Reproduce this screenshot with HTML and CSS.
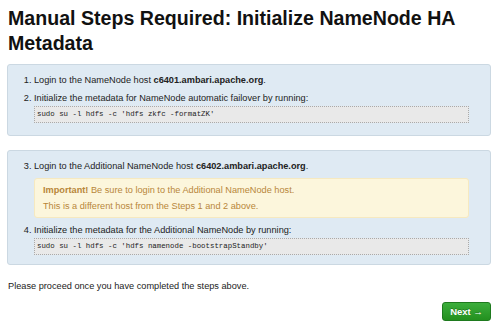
FILE: index.html
```html
<!DOCTYPE html>
<html lang="en">

<head>
    <meta charset="UTF-8">
    <title>Manual Steps Required</title>
    <link rel="stylesheet" href="styles.css">
</head>

<body>

    <div class="page">
        <h2 class="title">Manual Steps Required: Initialize NameNode HA Metadata</h2>

        <div class="well">
            <ol class="steps">
                <li>Login to the NameNode host <b>c6401.ambari.apache.org</b>.</li>
                <li>Initialize the metadata for NameNode automatic failover by running:
                    <div class="code">sudo su -l hdfs -c 'hdfs zkfc -formatZK'</div>
                </li>
            </ol>
        </div>

        <div class="well well-last">
            <ol class="steps" start="3">
                <li>Login to the Additional NameNode host <b>c6402.ambari.apache.org</b>.
                    <div class="alert">
                        <b>Important!</b> Be sure to login to the Additional NameNode host.<br>
                        This is a different host from the Steps 1 and 2 above.
                    </div>
                </li>
                <li>Initialize the metadata for the Additional NameNode by running:
                    <div class="code">sudo su -l hdfs -c 'hdfs namenode -bootstrapStandby'</div>
                </li>
            </ol>
        </div>

        <p class="proceed">Please proceed once you have completed the steps above.</p>

        <div class="actions">
            <button class="btn-next">Next &rarr;</button>
        </div>
    </div>

</body>

</html>
```

FILE: styles.css
```css
body {
    margin: 0;
    font-family: "Liberation Sans", Arial, sans-serif;
    font-size: 9.2px;
    color: #222;
    background: #fff;
}

.page {
    padding: 0 9px 0 7px;
}

.title {
    margin: 6px 0 8px 1px;
    font-size: 19.6px;
    line-height: 25px;
    font-weight: bold;
    color: #111;
}

.well {
    background-color: #dfeaf3;
    border: 1px solid #cbd8e2;
    border-radius: 3px;
    padding: 7px 21px 12px 0;
    margin-bottom: 14px;
}

.well-last {
    padding-bottom: 9px;
}

.steps {
    margin: 0;
    padding-left: 26px;
}

.steps li {
    line-height: 16px;
    margin-bottom: 2px;
}

.steps li:last-child {
    margin-bottom: 0;
}

.code {
    font-family: "Liberation Mono", "Courier New", monospace;
    font-size: 7.4px;
    line-height: 15px;
    background-color: #e9e9e9;
    border: 1px dotted #aaa;
    padding: 0 2px;
    margin-top: 0;
}

.alert {
    background-color: #fcf6dc;
    border: 1px solid #f6e9c0;
    border-radius: 3px;
    color: #b8863a;
    padding: 3px 8px;
    margin: 4px 0 4px;
}

.proceed {
    margin: 16px 0 0 1px;
}

.actions {
    display: flex;
    justify-content: flex-end;
    margin-top: 11px;
}

.btn-next {
    font-family: "Liberation Sans", Arial, sans-serif;
    font-size: 9.5px;
    font-weight: bold;
    color: #fff;
    width: 49px;
    height: 19px;
    padding: 0;
    border: 1px solid #1e7a1e;
    border-radius: 3px;
    background: linear-gradient(#3cae3c, #23901f);
    text-shadow: 0 -1px 0 rgba(0, 0, 0, 0.25);
}
```
